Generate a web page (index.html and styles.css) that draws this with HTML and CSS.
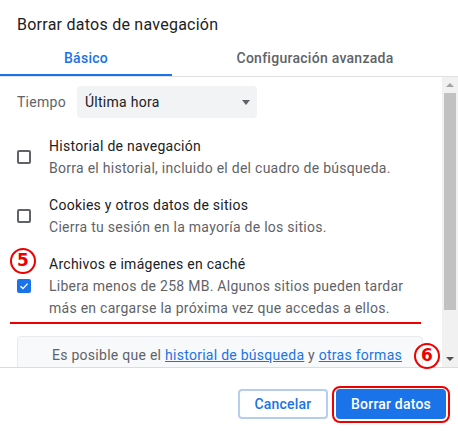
FILE: index.html
```html
<!DOCTYPE html>
<html lang="es">
<head>
    <meta charset="UTF-8">
    <title>Borrar datos de navegación</title>
    <link rel="stylesheet" href="styles.css">
</head>
<body>
    <div id="dialog">
        <h1 id="title">Borrar datos de navegación</h1>
        <div id="tabs">
            <div class="tab active">Básico</div>
            <div class="tab">Configuración avanzada</div>
        </div>
        <div id="main">
            <div id="content">
                <div id="timeRow">
                    <span class="label">Tiempo</span>
                    <div class="select">
                        <span>Última hora</span>
                        <span class="arrow"></span>
                    </div>
                </div>
                <div class="row">
                    <div class="check"></div>
                    <div class="text">
                        <p class="name">Historial de navegación</p>
                        <p class="desc">Borra el historial, incluido el del cuadro de búsqueda.</p>
                    </div>
                </div>
                <div class="row">
                    <div class="check"></div>
                    <div class="text">
                        <p class="name">Cookies y otros datos de sitios</p>
                        <p class="desc">Cierra tu sesión en la mayoría de los sitios.</p>
                    </div>
                </div>
                <div class="row">
                    <div class="check on">
                        <svg width="10" height="10" viewBox="0 0 10 10"><path d="M1.5 5.2 L4 7.6 L8.6 2.6" fill="none" stroke="#fff" stroke-width="1.4"/></svg>
                    </div>
                    <div class="text">
                        <p class="name">Archivos e imágenes en caché</p>
                        <p class="desc">Libera menos de 258 MB. Algunos sitios pueden tardar más en cargarse la próxima vez que accedas a ellos.</p>
                    </div>
                </div>
                <div id="info">
                    Es posible que el <a href="#">historial de búsqueda</a> y <a href="#">otras formas</a>
                </div>
            </div>
            <div id="scrollbar">
                <div class="sbBtn"><span class="up"></span></div>
                <div class="thumb"></div>
                <div class="sbFill"></div>
                <div class="sbBtn"><span class="down"></span></div>
            </div>
        </div>
        <div id="footer">
            <button class="btn cancel">Cancelar</button>
            <button class="btn action">Borrar datos</button>
        </div>

        <div class="mark" id="mark5">5</div>
        <div class="mark" id="mark6">6</div>
        <div id="redLine"></div>
        <div id="redBox"></div>
    </div>
</body>
</html>
```

FILE: styles.css
```css
* {
    margin: 0;
    padding: 0;
    box-sizing: border-box;
}
body {
    font-family: Roboto, "Liberation Sans", sans-serif;
    font-size: 14px;
    letter-spacing: 0.27px;
    color: #202124;
    background: #fff;
}
#dialog {
    position: relative;
    width: 458px;
    height: 431px;
    display: flex;
    flex-direction: column;
    overflow: hidden;
}
#title {
    font-size: 16px;
    font-weight: 400;
    line-height: 20px;
    letter-spacing: 0.25px;
    padding: 15px 0 0 17px;
    color: #202124;
}
#tabs {
    display: flex;
    margin-top: 5px;
    border-bottom: 1px solid #e0e0e0;
}
.tab {
    height: 36px;
    padding-top: 1px;
    display: flex;
    align-items: center;
    justify-content: center;
    font-weight: 500;
    color: #5f6368;
    border-bottom: 2px solid transparent;
    flex: 1;
}
.tab.active {
    flex: 0 0 172px;
    color: #1a73e8;
    border-bottom-color: #1a73e8;
}

#main {
    display: flex;
    height: 290px;
    overflow: hidden;
}
#content {
    flex: 1;
    padding: 0 19px 0 17px;
}
#timeRow {
    display: flex;
    align-items: center;
    margin-top: 9px;
}
.label {
    color: #5f6368;
    width: 60px;
}
.select {
    width: 180px;
    height: 32px;
    background: #f1f3f4;
    border-radius: 4px;
    display: flex;
    align-items: center;
    justify-content: space-between;
    padding: 0 7px 0 8px;
}
.arrow {
    width: 0;
    height: 0;
    border-left: 4px solid transparent;
    border-right: 4px solid transparent;
    border-top: 5px solid #5f6368;
}

.row {
    display: flex;
    align-items: center;
    padding: 8px 0 7px;
}
#timeRow + .row {
    margin-top: 9px;
}
.check {
    width: 14px;
    height: 14px;
    border: 2px solid #5f6368;
    border-radius: 2px;
    margin-right: 18px;
    flex: none;
    display: flex;
    align-items: center;
    justify-content: center;
}
.check.on {
    background: #1a73e8;
    border-color: #1a73e8;
}
.text p {
    line-height: 22px;
}
.desc {
    color: #5f6368;
}
#info {
    margin-top: 10px;
    height: 70px;
    background: #f8f9fa;
    border: 1px solid #e8eaed;
    border-radius: 4px;
    padding: 8px 0 0 34px;
    line-height: 20px;
    color: #5f6368;
}
#info a {
    color: #1a73e8;
}

#scrollbar {
    width: 16px;
    flex: none;
    background: #f1f1f1;
    display: flex;
    flex-direction: column;
}
.sbBtn {
    height: 16px;
    display: flex;
    align-items: center;
    justify-content: center;
}
.up,
.down {
    width: 0;
    height: 0;
    border-left: 4px solid transparent;
    border-right: 4px solid transparent;
}
.up {
    border-bottom: 4px solid #a3a3a3;
}
.down {
    border-top: 4px solid #505050;
}
.thumb {
    height: 217px;
    margin: 0 2px;
    background: #c1c1c1;
}
.sbFill {
    flex: 1;
}

#footer {
    flex: 1;
    border-top: 1px solid #dadce0;
    display: flex;
    justify-content: flex-end;
    align-items: flex-start;
    gap: 8px;
    padding: 21px 12px 0 0;
}
.btn {
    height: 30px;
    border-radius: 4px;
    font-family: inherit;
    font-size: 14px;
    font-weight: 500;
    letter-spacing: 0.2px;
}
.cancel {
    width: 90px;
    background: #fff;
    color: #1a73e8;
    border: 2px solid #b5cdf3;
}
.action {
    width: 110px;
    background: #1a73e8;
    color: #fff;
    border: none;
}

/* annotations */
.mark {
    position: absolute;
    width: 26px;
    height: 26px;
    border: 2.5px solid #e00;
    border-radius: 50%;
    color: #e00;
    font-family: "DejaVu Sans", sans-serif;
    font-weight: 700;
    font-size: 17px;
    line-height: 21px;
    letter-spacing: 0;
    text-align: center;
}
#mark5 {
    left: 10px;
    top: 248px;
}
#mark6 {
    left: 414px;
    top: 343px;
}
#redLine {
    position: absolute;
    left: 10px;
    top: 322px;
    width: 411px;
    height: 2px;
    background: #e00;
}
#redBox {
    position: absolute;
    left: 332px;
    top: 386px;
    width: 118px;
    height: 37px;
    border: 2px solid #e00;
    border-radius: 8px;
}
```
